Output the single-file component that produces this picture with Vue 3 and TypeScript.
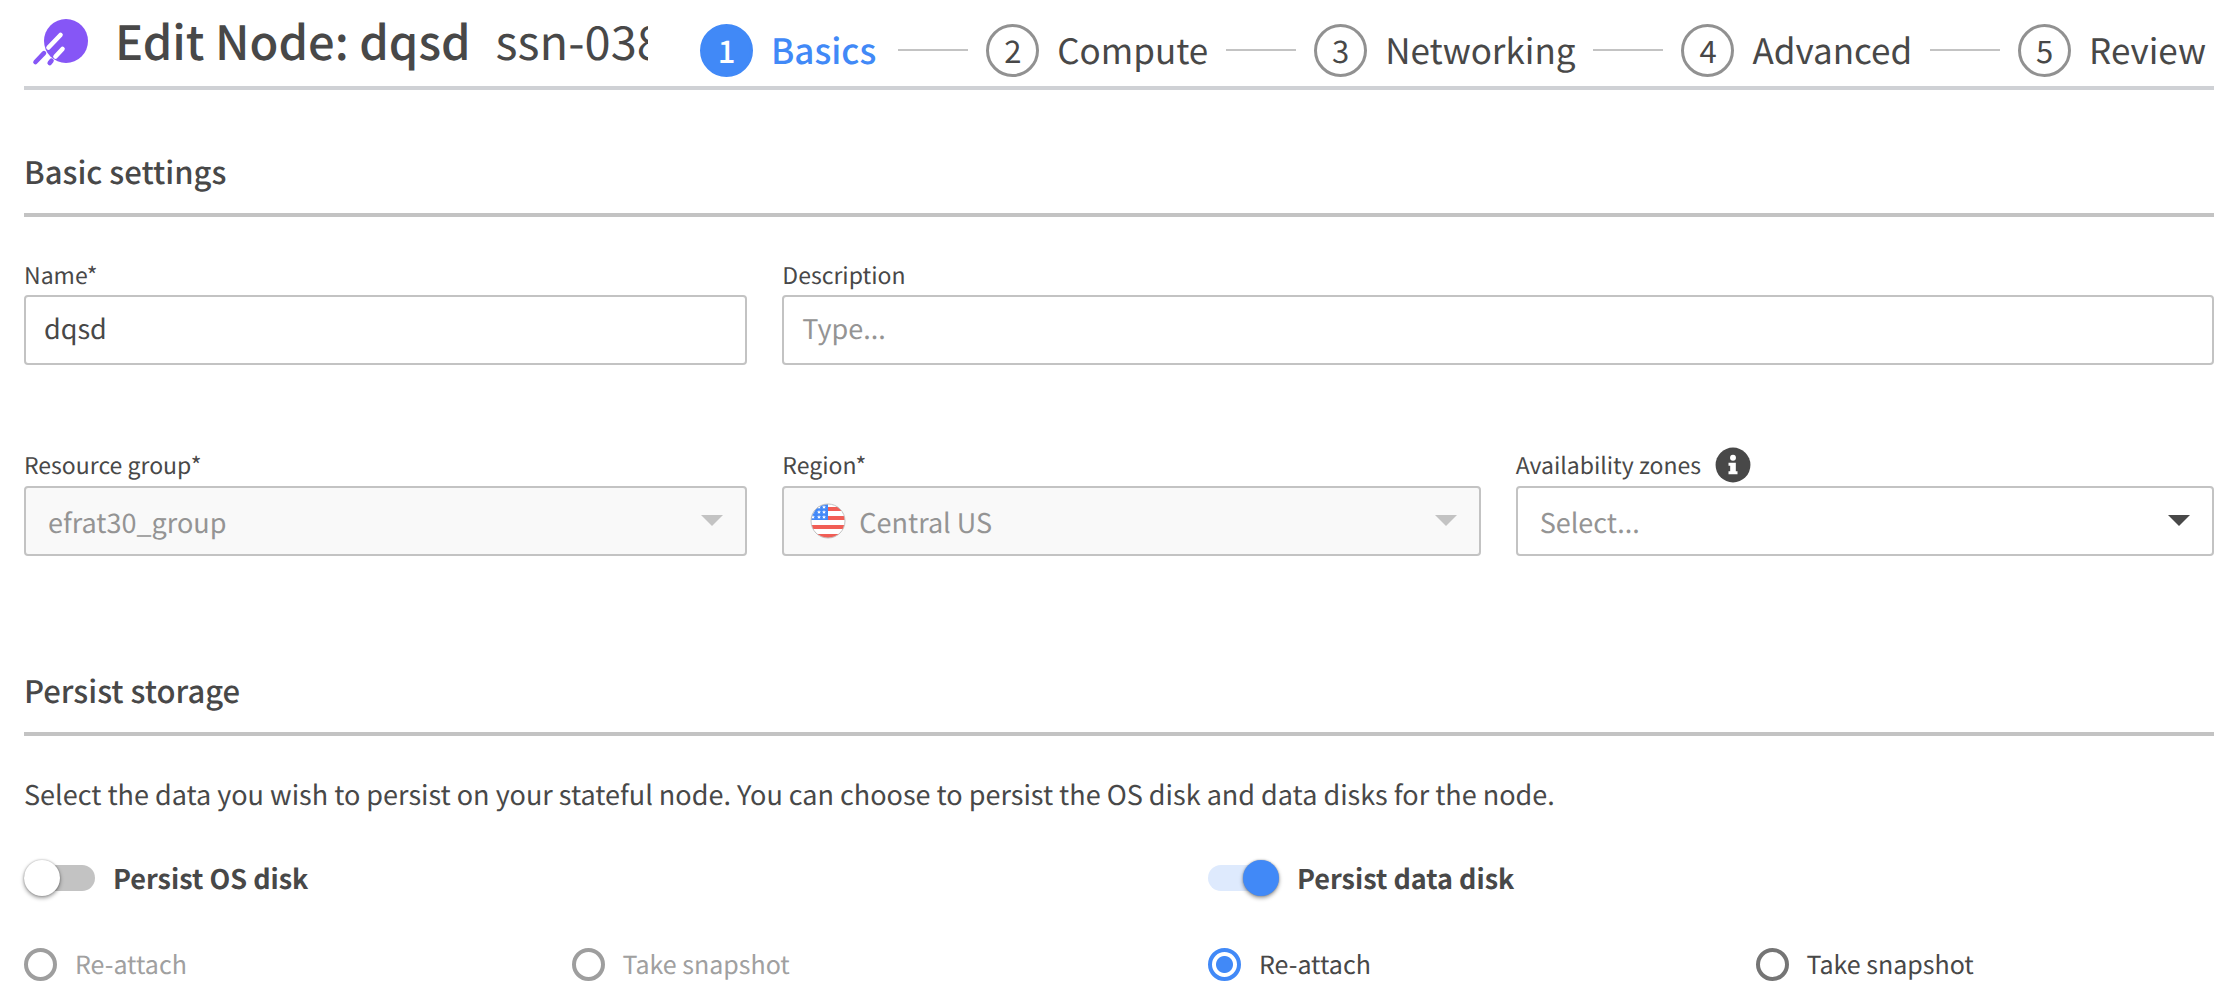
<script setup lang="ts">
import { ref } from 'vue'

interface Disk {
  id: string
  label: string
  enabled: boolean
  mode: string
}

const steps = ['Basics', 'Compute', 'Networking', 'Advanced', 'Review']
const current = ref(0)
const name = ref('dqsd')
const description = ref('')
const disks = ref<Disk[]>([
  { id: 'os', label: 'Persist OS disk', enabled: false, mode: '' },
  { id: 'data', label: 'Persist data disk', enabled: true, mode: 'Re-attach' },
])
const modes = ['Re-attach', 'Take snapshot']
const starRows = [4, 9, 14]
const starCols = [3, 9, 14]
</script>

<template>
  <main class="page">
    <header class="top">
      <svg class="logo" viewBox="0 0 58 50" aria-hidden="true">
        <circle cx="34" cy="24" r="22" fill="#8656f6" />
        <g stroke-linecap="round" stroke-width="4.6">
          <path d="M16.5 30.5 28.5 18M23.5 39.5 30.5 32" stroke="#fff" />
          <path d="M3.5 45 12 36.2M17.7 46 19.5 43.8" stroke="#8656f6" />
        </g>
      </svg>
      <h1 class="title">Edit Node: dqsd</h1>
      <span class="node-id">ssn-038</span>
      <nav class="steps" aria-label="Steps">
        <template v-for="(step, i) in steps" :key="step">
          <span v-if="i" class="line"></span>
          <button type="button" class="step" :class="{ active: i === current }" @click="current = i">
            <span class="num">{{ i + 1 }}</span>
            <span>{{ step }}</span>
          </button>
        </template>
      </nav>
    </header>

    <section class="basic">
      <h2 class="heading">Basic settings</h2>
      <div class="grid">
        <div class="field">
          <label class="label" for="name">Name*</label>
          <input id="name" v-model="name" class="control" type="text" />
        </div>
        <div class="field wide">
          <label class="label" for="description">Description</label>
          <input id="description" v-model="description" class="control" type="text" placeholder="Type..." />
        </div>
        <div class="field">
          <div class="label-row">
            <label class="label" for="group">Resource group*</label>
          </div>
          <div class="select disabled">
            <select id="group" class="control" disabled><option>efrat30_group</option></select>
            <svg class="caret" viewBox="0 0 22 11" aria-hidden="true"><path d="M0 0H22L11 11Z" /></svg>
          </div>
        </div>
        <div class="field">
          <div class="label-row">
            <label class="label" for="region">Region*</label>
          </div>
          <div class="select disabled">
            <select id="region" class="control flagged" disabled><option>Central US</option></select>
            <svg class="flag" viewBox="0 0 36 36" aria-hidden="true">
              <defs><clipPath id="flag-clip"><circle cx="18" cy="18" r="17" /></clipPath></defs>
              <g clip-path="url(#flag-clip)">
                <path d="M0 0H36V36H0Z" fill="#fff" />
                <path d="M0 4H36V8H0ZM0 13H36V17H0ZM0 22H36V26H0ZM0 31H36V36H0Z" fill="#f15e56" />
                <path d="M0 0H18V17H0Z" fill="#4389f8" />
                <template v-for="y in starRows" :key="y">
                  <path
                    v-for="x in starCols"
                    :key="x"
                    :transform="`translate(${x} ${y})`"
                    d="M0-2 .6-.6 2-.6 .9.4 1.3 1.8 0 1-1.3 1.8-.9.4-2-.6-.6-.6Z"
                    fill="#fff"
                  />
                </template>
              </g>
              <circle cx="18" cy="18" r="17" fill="none" stroke="#c3c3c3" />
            </svg>
            <svg class="caret" viewBox="0 0 22 11" aria-hidden="true"><path d="M0 0H22L11 11Z" /></svg>
          </div>
        </div>
        <div class="field">
          <div class="label-row">
            <label class="label" for="zones">Availability zones</label>
            <svg class="info" viewBox="0 0 512 512" role="img" aria-label="Information">
              <circle cx="256" cy="256" r="248" fill="#484848" />
              <circle cx="256" cy="152" r="42" fill="#fff" />
              <path d="M192 224H296V344H320V388H192V344H216V268H192Z" fill="#fff" />
            </svg>
          </div>
          <div class="select">
            <select id="zones" class="control"><option>Select...</option></select>
            <svg class="caret" viewBox="0 0 22 11" aria-hidden="true"><path d="M0 0H22L11 11Z" /></svg>
          </div>
        </div>
      </div>
    </section>

    <section class="storage">
      <h2 class="heading">Persist storage</h2>
      <p class="intro">
        Select the data you wish to persist on your stateful node. You can choose to persist the OS disk and data disks for the node.
      </p>
      <div class="disks">
        <div v-for="disk in disks" :key="disk.id" class="disk">
          <label class="switch-row">
            <input v-model="disk.enabled" class="switch" type="checkbox" role="switch" />
            <span>{{ disk.label }}</span>
          </label>
          <div class="modes" role="radiogroup" :aria-label="disk.label">
            <label v-for="mode in modes" :key="mode" class="mode" :class="{ off: !disk.enabled }">
              <input v-model="disk.mode" class="radio" type="radio" :name="disk.id" :value="mode" :disabled="!disk.enabled" />
              <span>{{ mode }}</span>
            </label>
          </div>
        </div>
      </div>
    </section>
  </main>
</template>

<style>
body {
  background: #fff;
}
</style>

<style scoped>
.page {
  box-sizing: border-box;
  padding: 0 20px 0 24px;
  color: #484848;
  font-family: "Noto Sans CJK SC", "Noto Sans", sans-serif;
  font-size: 27px;
  text-rendering: geometricPrecision;
}
.page *, .page *::before {
  box-sizing: border-box;
}
button, input, select {
  font: inherit;
  color: inherit;
  text-rendering: inherit;
}
.top {
  display: flex;
  align-items: center;
  height: 90px;
  border-bottom: 4px solid #cfd1d5;
}
.logo {
  flex: none;
  width: 58px;
  height: 50px;
  margin: 0 25px 2px 8px;
}
.title {
  flex: none;
  margin: 0 25px 6px 0;
  font-size: 47px;
  line-height: 60px;
  font-weight: 500;
}
.node-id {
  flex: 1 1 0;
  min-width: 0;
  margin-bottom: 6px;
  overflow: hidden;
  white-space: nowrap;
  font-size: 47px;
  line-height: 60px;
}
.steps {
  flex: none;
  display: flex;
  align-items: center;
  gap: 18px;
  margin: 14px 8px 0 52px;
}
.step {
  display: flex;
  align-items: center;
  gap: 18px;
  padding: 0;
  border: 0;
  background: none;
  font-size: 35px;
  line-height: 50px;
  cursor: pointer;
}
.num {
  display: flex;
  align-items: center;
  justify-content: center;
  width: 53px;
  height: 53px;
  border: 3px solid #919191;
  border-radius: 50%;
  font-size: 31px;
}
.active {
  margin-right: 4px;
  color: #4189f7;
  font-weight: 500;
}
.active .num {
  border-color: #4189f7;
  background: #4189f7;
  color: #fff;
}
.line {
  width: 70px;
  height: 2px;
  background: #c3c3c3;
}
.heading {
  margin: 0;
  padding-bottom: 20px;
  border-bottom: 4px solid #c3c3c3;
  font-size: 31px;
  line-height: 44px;
  font-weight: 500;
}
.basic {
  padding-top: 59px;
}
.grid {
  display: grid;
  grid-template-columns: 723fr 698fr 698fr;
  gap: 78px 35px;
  padding-top: 38px;
}
.field {
  display: flex;
  flex-direction: column;
}
.wide {
  grid-column: span 2;
}
.label {
  padding-bottom: 2px;
  font-size: 23px;
  line-height: 38px;
}
.label-row {
  display: flex;
  align-items: center;
  gap: 14px;
  height: 43px;
}
.info {
  width: 36px;
  height: 36px;
}
.control {
  width: 100%;
  height: 70px;
  padding: 0 18px 6px;
  border: 2px solid #c3c3c3;
  border-radius: 4px;
  background: #fff;
  appearance: none;
}
.control::placeholder {
  color: #949494;
  opacity: 1;
}
.select {
  position: relative;
}
.select .control {
  padding: 0 60px 0 22px;
  color: #949494;
  opacity: 1;
}
.select .flagged {
  padding-left: 75px;
}
.disabled .control {
  background: #f9f9f9;
}
.caret {
  position: absolute;
  top: 29px;
  right: 24px;
  width: 22px;
  height: 11px;
  fill: #484848;
  pointer-events: none;
}
.disabled .caret {
  fill: #c3c3c3;
}
.flag {
  position: absolute;
  top: 17px;
  left: 28px;
  width: 36px;
  height: 36px;
}
.storage {
  padding-top: 112px;
}
.intro {
  margin: 36px 0 0;
  line-height: 44px;
}
.disks {
  display: grid;
  grid-template-columns: 1184fr 1006fr;
  padding-top: 40px;
}
.switch-row {
  display: flex;
  align-items: center;
  width: max-content;
  gap: 18px;
  line-height: 44px;
  font-weight: 700;
}
.switch {
  position: relative;
  width: 71px;
  height: 26px;
  margin: 0;
  border-radius: 13px;
  background: #c3c3c3;
  appearance: none;
}
.switch::before {
  content: "";
  position: absolute;
  top: -5px;
  left: 0;
  width: 36px;
  height: 36px;
  border-radius: 50%;
  background: #fff;
  box-shadow: 0 2px 4px rgba(0, 0, 0, 0.4), 0 0 2px rgba(0, 0, 0, 0.3);
}
.switch:checked {
  background: #deeafd;
}
.switch:checked::before {
  left: 35px;
  background: #4189f7;
}
.modes {
  display: grid;
  grid-template-columns: calc(25vw - 11px) auto;
  padding-top: 42px;
}
.mode {
  display: flex;
  align-items: center;
  gap: 18px;
  font-size: 25px;
  line-height: 44px;
}
.off {
  color: #a0a0a0;
}
.radio {
  width: 33px;
  height: 33px;
  margin: 0;
  border: 4px solid #757575;
  border-radius: 50%;
  background: #fff;
  appearance: none;
}
.radio:disabled {
  border-color: #9e9e9e;
}
.radio:checked {
  border-color: #4189f7;
  background: radial-gradient(circle, #4189f7 8px, #fff 9px);
}
</style>
